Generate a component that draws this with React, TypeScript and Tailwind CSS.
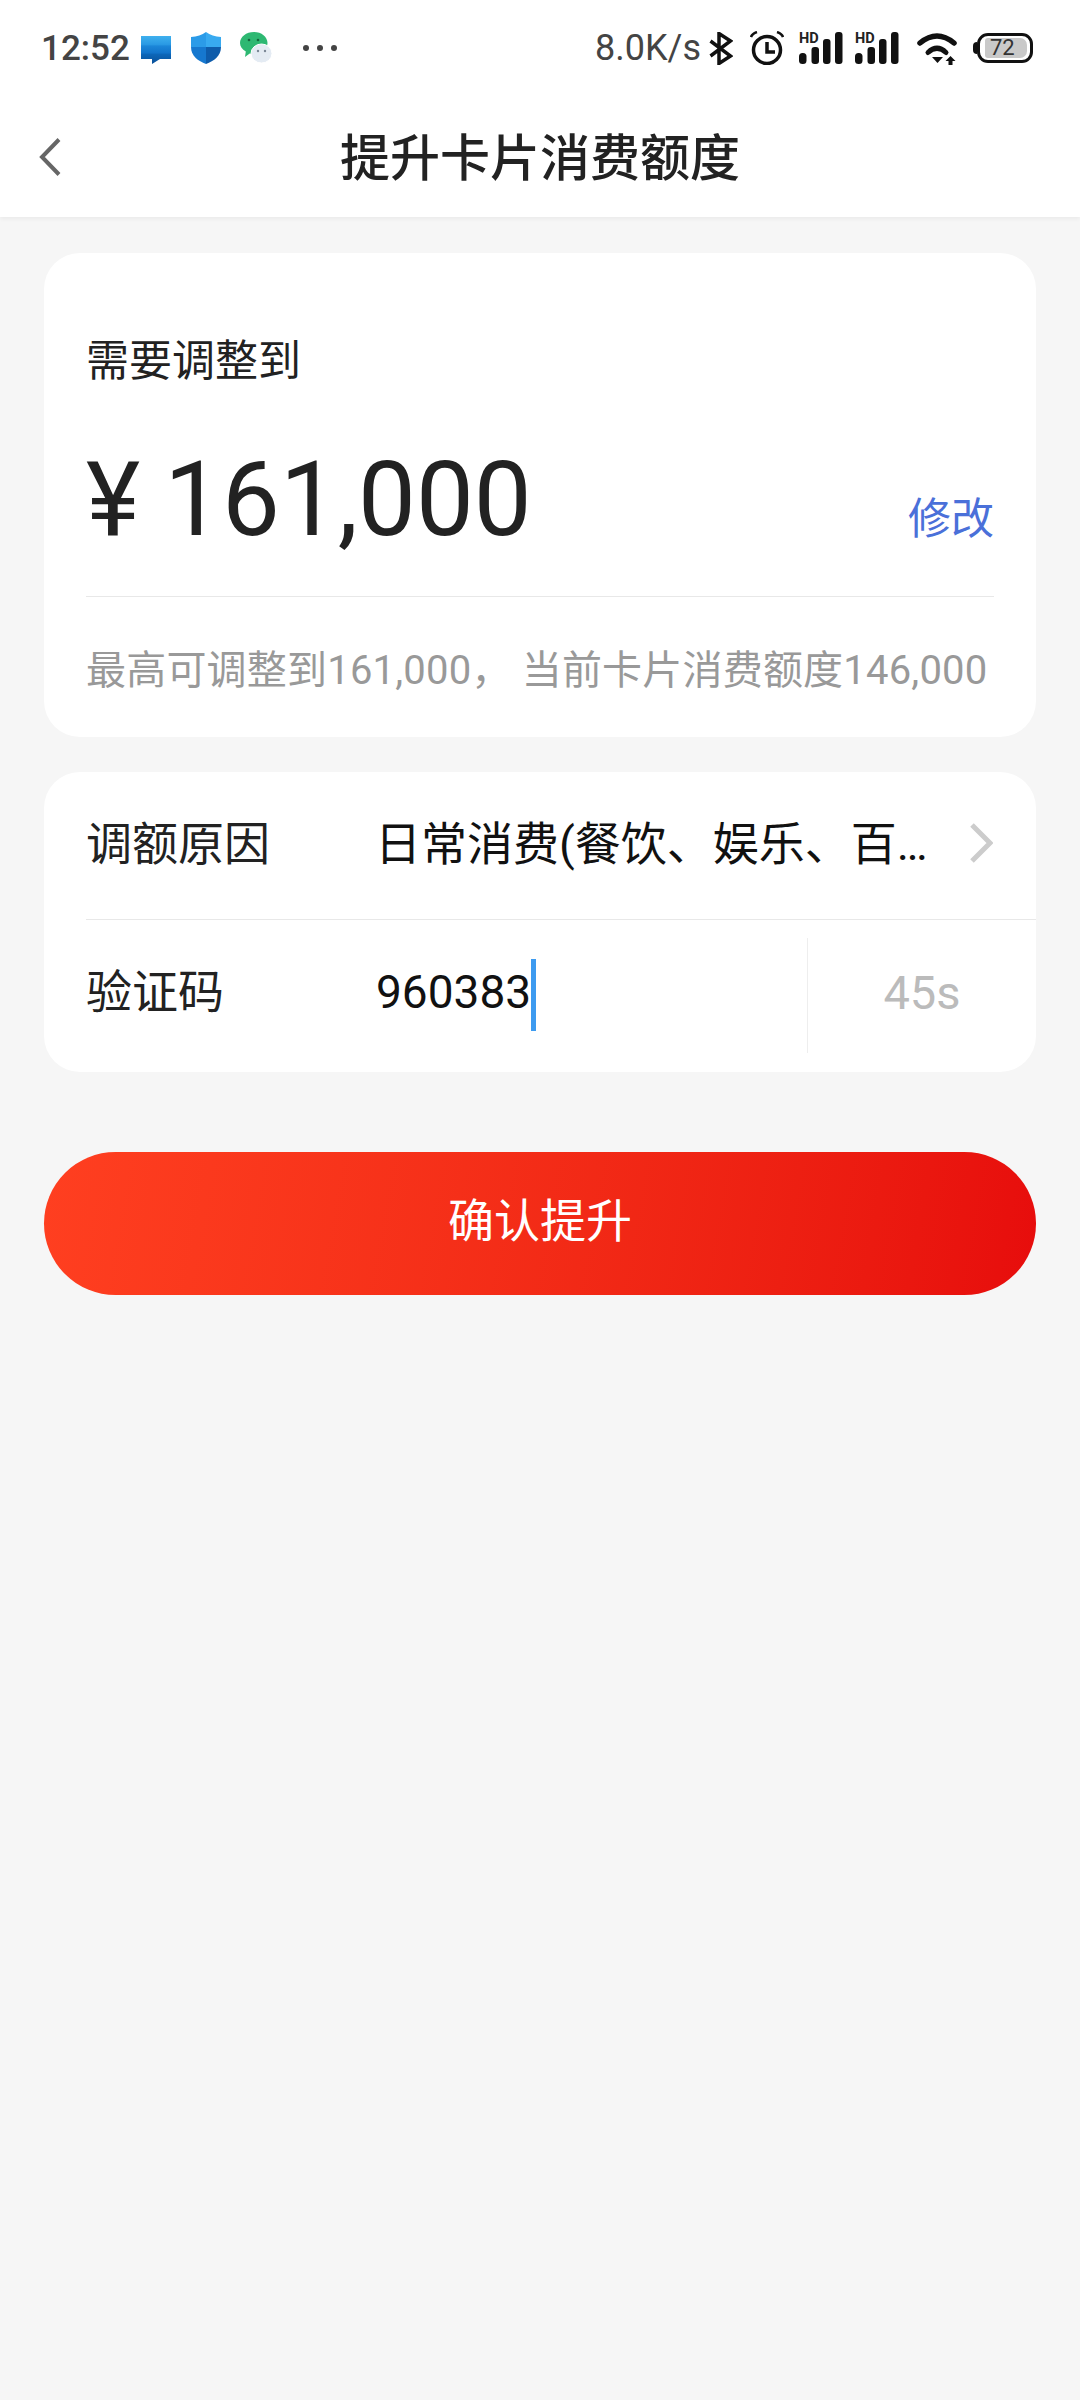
const sans = 'font-["Roboto","Noto_Sans_CJK_SC",sans-serif]'

function MessageIcon() {
  return (
    <svg width="30" height="28" viewBox="0 0 30 28" className="ml-[11px] mt-[4px]">
      <defs>
        <linearGradient id="msg" x1="0" y1="0" x2="0" y2="1">
          <stop offset="0" stopColor="#3fb0ee" />
          <stop offset="0.3" stopColor="#2a9ae4" />
          <stop offset="0.36" stopColor="#1b86d8" />
          <stop offset="0.6" stopColor="#1274cb" />
          <stop offset="0.66" stopColor="#0c66b8" />
          <stop offset="1" stopColor="#0a4f98" />
        </linearGradient>
      </defs>
      <path d="M0 0h30v23H19l-8 5v-5H0z" fill="url(#msg)" />
    </svg>
  )
}

function ShieldIcon() {
  return (
    <svg width="30" height="32" viewBox="0 0 30 32" className="ml-[20px]">
      <path d="M15 0C11 3 6 4.500 0 5v10h15z" fill="#2b9be8" />
      <path d="M15 0c4 3 9 4.500 15 5v10H15z" fill="#38aaf0" />
      <path d="M0 15h15v17C7 29 0 24 0 15z" fill="#1678cf" />
      <path d="M15 15h15c0 9-7 14-15 17z" fill="#0e5cab" />
    </svg>
  )
}

function WechatIcon() {
  return (
    <svg width="32" height="32" viewBox="0 0 32 32" className="ml-[19px]">
      <path d="M14 0c7.500 0 13.500 4.800 13.500 11S21.500 22 14 22c-1.500 0-3-.2-4.300-.6L5 25l.8-5.500C2.200 17.500 0 14.500 0 11 0 4.800 6.300 0 14 0z" fill="#2eb872" />
      <ellipse cx="21.500" cy="21.500" rx="10.500" ry="9.500" fill="#e4ebf3" stroke="#fff" strokeWidth="1" />
      <circle cx="9" cy="8" r="1.300" fill="#14663e" />
      <circle cx="18" cy="8" r="1.300" fill="#14663e" />
      <circle cx="18" cy="19" r="1.200" fill="#7a8796" />
      <circle cx="25" cy="19" r="1.200" fill="#7a8796" />
    </svg>
  )
}

function BluetoothIcon() {
  return (
    <svg width="24" height="33" viewBox="0 0 24 33" className="ml-[8px]" fill="none" stroke="#111" strokeWidth="3.500">
      <path d="M1.500 9l20 15L10 31.500v-30L21.500 9l-20 15" />
    </svg>
  )
}

function AlarmIcon() {
  return (
    <svg width="34" height="34" viewBox="0 0 34 34" className="ml-[17px]" fill="none" stroke="#111">
      <circle cx="17" cy="19" r="13.500" strokeWidth="3.500" />
      <path d="M17 11v10h8" strokeWidth="3.500" />
      <path d="M1 6c1-3 3-4 6-5M33 6c-1-3-3-4-6-5" strokeWidth="2.500" />
    </svg>
  )
}

function SignalIcon({ className }: { className: string }) {
  return (
    <svg width="45" height="38" viewBox="0 -6 45 38" className={className}>
      <rect x="0" y="21" width="7.500" height="11" rx="3.500" fill="#111" />
      <rect x="12.500" y="15" width="7.500" height="17" rx="3" fill="#111" />
      <rect x="24" y="7" width="7.500" height="25" rx="3" fill="#111" />
      <rect x="36" y="0" width="7.500" height="32" rx="3" fill="#111" />
      <text x="0" y="11" fontSize="14.500" fontWeight="700" fontFamily="Roboto, sans-serif" fill="#222">HD</text>
    </svg>
  )
}

function WifiIcon() {
  return (
    <svg width="41" height="33" viewBox="0 0 41 33" className="ml-[17px]" fill="none">
      <path d="M3 11Q20-3 37 11" stroke="#111" strokeWidth="5.500" strokeLinecap="round" />
      <path d="M11 20.500Q20 12 29 20.500" stroke="#111" strokeWidth="5" strokeLinecap="round" />
      <path d="M15 25h11l-5.500 6z" fill="#111" />
      <path d="M33.500 24l5 5h-3v4h-4v-4h-3z" fill="#111" />
    </svg>
  )
}

function BatteryIcon() {
  return (
    <div className="ml-[15px] flex h-[30px] w-[60px] items-center">
      <div className="h-[12px] w-[5px] rounded-l-full bg-[#111]" />
      <div className="flex h-[30px] flex-1 items-center rounded-[11px] border-[3px] border-[#111] py-[2px] pl-[5px] pr-[3px]">
        <div className="flex h-full w-[42px] items-center rounded-l-[3px] rounded-r-[7px] bg-[#c9c9c9] pl-[5px] text-[22px] leading-none text-[#333]">
          72
        </div>
      </div>
    </div>
  )
}

export default function App() {
  return (
    <div className={`flex min-h-[2400px] w-[1080px] flex-col bg-[#f6f6f6] ${sans}`}>
      <header className="bg-white shadow-[0_2px_4px_rgba(0,0,0,0.05)]">
        <div className="flex h-[96px] items-center justify-between pl-[41px] pr-[47px]">
          <div className="flex items-center">
            <span className="text-[35px] font-medium leading-none text-[#444]">12:52</span>
            <MessageIcon />
            <ShieldIcon />
            <WechatIcon />
            <div className="ml-[31px] flex gap-[8px]">
              <span className="h-[6px] w-[6px] rounded-full bg-[#444]" />
              <span className="h-[6px] w-[6px] rounded-full bg-[#444]" />
              <span className="h-[6px] w-[6px] rounded-full bg-[#444]" />
            </div>
          </div>
          <div className="flex items-center">
            <span className="text-[36px] leading-none text-[#444]">8.0K/s</span>
            <BluetoothIcon />
            <AlarmIcon />
            <SignalIcon className="-mt-[6px] ml-[15px]" />
            <SignalIcon className="-mt-[6px] ml-[11px]" />
            <WifiIcon />
            <BatteryIcon />
          </div>
        </div>
        <div className="flex h-[121px] items-center pl-[39px]">
          <svg width="22" height="38" viewBox="0 0 22 38" fill="none" className="shrink-0">
            <path d="M20 1.500L3 19l17 17.500" stroke="#666" strokeWidth="4" />
          </svg>
          <h1 className="flex-1 pr-[61px] pt-[5px] text-center text-[50px] font-medium leading-none text-[#222]">
            提升卡片消费额度
          </h1>
        </div>
      </header>

      <main className="px-[44px] pt-[36px]">
        <section className="h-[484px] rounded-[36px] bg-white px-[42px] pt-[83px]">
          <p className="text-[43px] leading-[50px] text-[#222]">需要调整到</p>
          <div className="mt-[54px] flex h-[120px] items-baseline justify-between">
            <div className="text-[103px] leading-[120px] text-[#222]">
              <span className="mr-[24px]">¥</span>161,000
            </div>
            <span className="-translate-y-px text-[43px] leading-none text-[#4a70d9]">修改</span>
          </div>
          <div className="mt-[36px] h-[1px] bg-[#e8e8e8]" />
          <p className="mt-[49px] whitespace-nowrap text-[40px] leading-[50px] tracking-[0.2px] text-[#999]">
            最高可调整到161,000， 当前卡片消费额度146,000
          </p>
        </section>

        <section className="mt-[35px] h-[300px] rounded-[36px] bg-white">
          <div className="ml-[42px] flex h-[148px] items-center border-b border-[#e8e8e8] pb-[3px] pr-[43px]">
            <span className="w-[289px] shrink-0 text-[46px] leading-none text-[#222]">调额原因</span>
            <span className="whitespace-nowrap text-[46px] leading-[60px] text-[#111]">
              日常消费(餐饮、娱乐、百…
            </span>
            <svg width="24" height="40" viewBox="0 0 24 40" fill="none" className="mb-[3px] ml-auto shrink-0">
              <path d="M3 2l18 18L3 38" stroke="#ccc" strokeWidth="5" />
            </svg>
          </div>
          <div className="ml-[42px] flex h-[151px] items-center pb-[8px]">
            <span className="w-[290px] shrink-0 text-[46px] leading-none text-[#222]">验证码</span>
            <div className="flex flex-1 items-center">
              <span className="text-[46px] leading-none text-[#111]">960383</span>
              <span className="mt-[7px] h-[72px] w-[5px] bg-[#3d9bf0]" />
            </div>
            <div className="mt-[7px] flex h-[115px] w-[229px] items-center justify-center border-l border-[#eeeeee] pb-[6px]">
              <span className="text-[47px] leading-none text-[#bbb]">45s</span>
            </div>
          </div>
        </section>

        <button className="mt-[80px] flex h-[143px] w-full items-center justify-center rounded-full bg-linear-100 from-[#ff3f20] to-[#e70c0c] pb-[6px] text-[46px] leading-none text-white">
          确认提升
        </button>
      </main>
    </div>
  )
}
